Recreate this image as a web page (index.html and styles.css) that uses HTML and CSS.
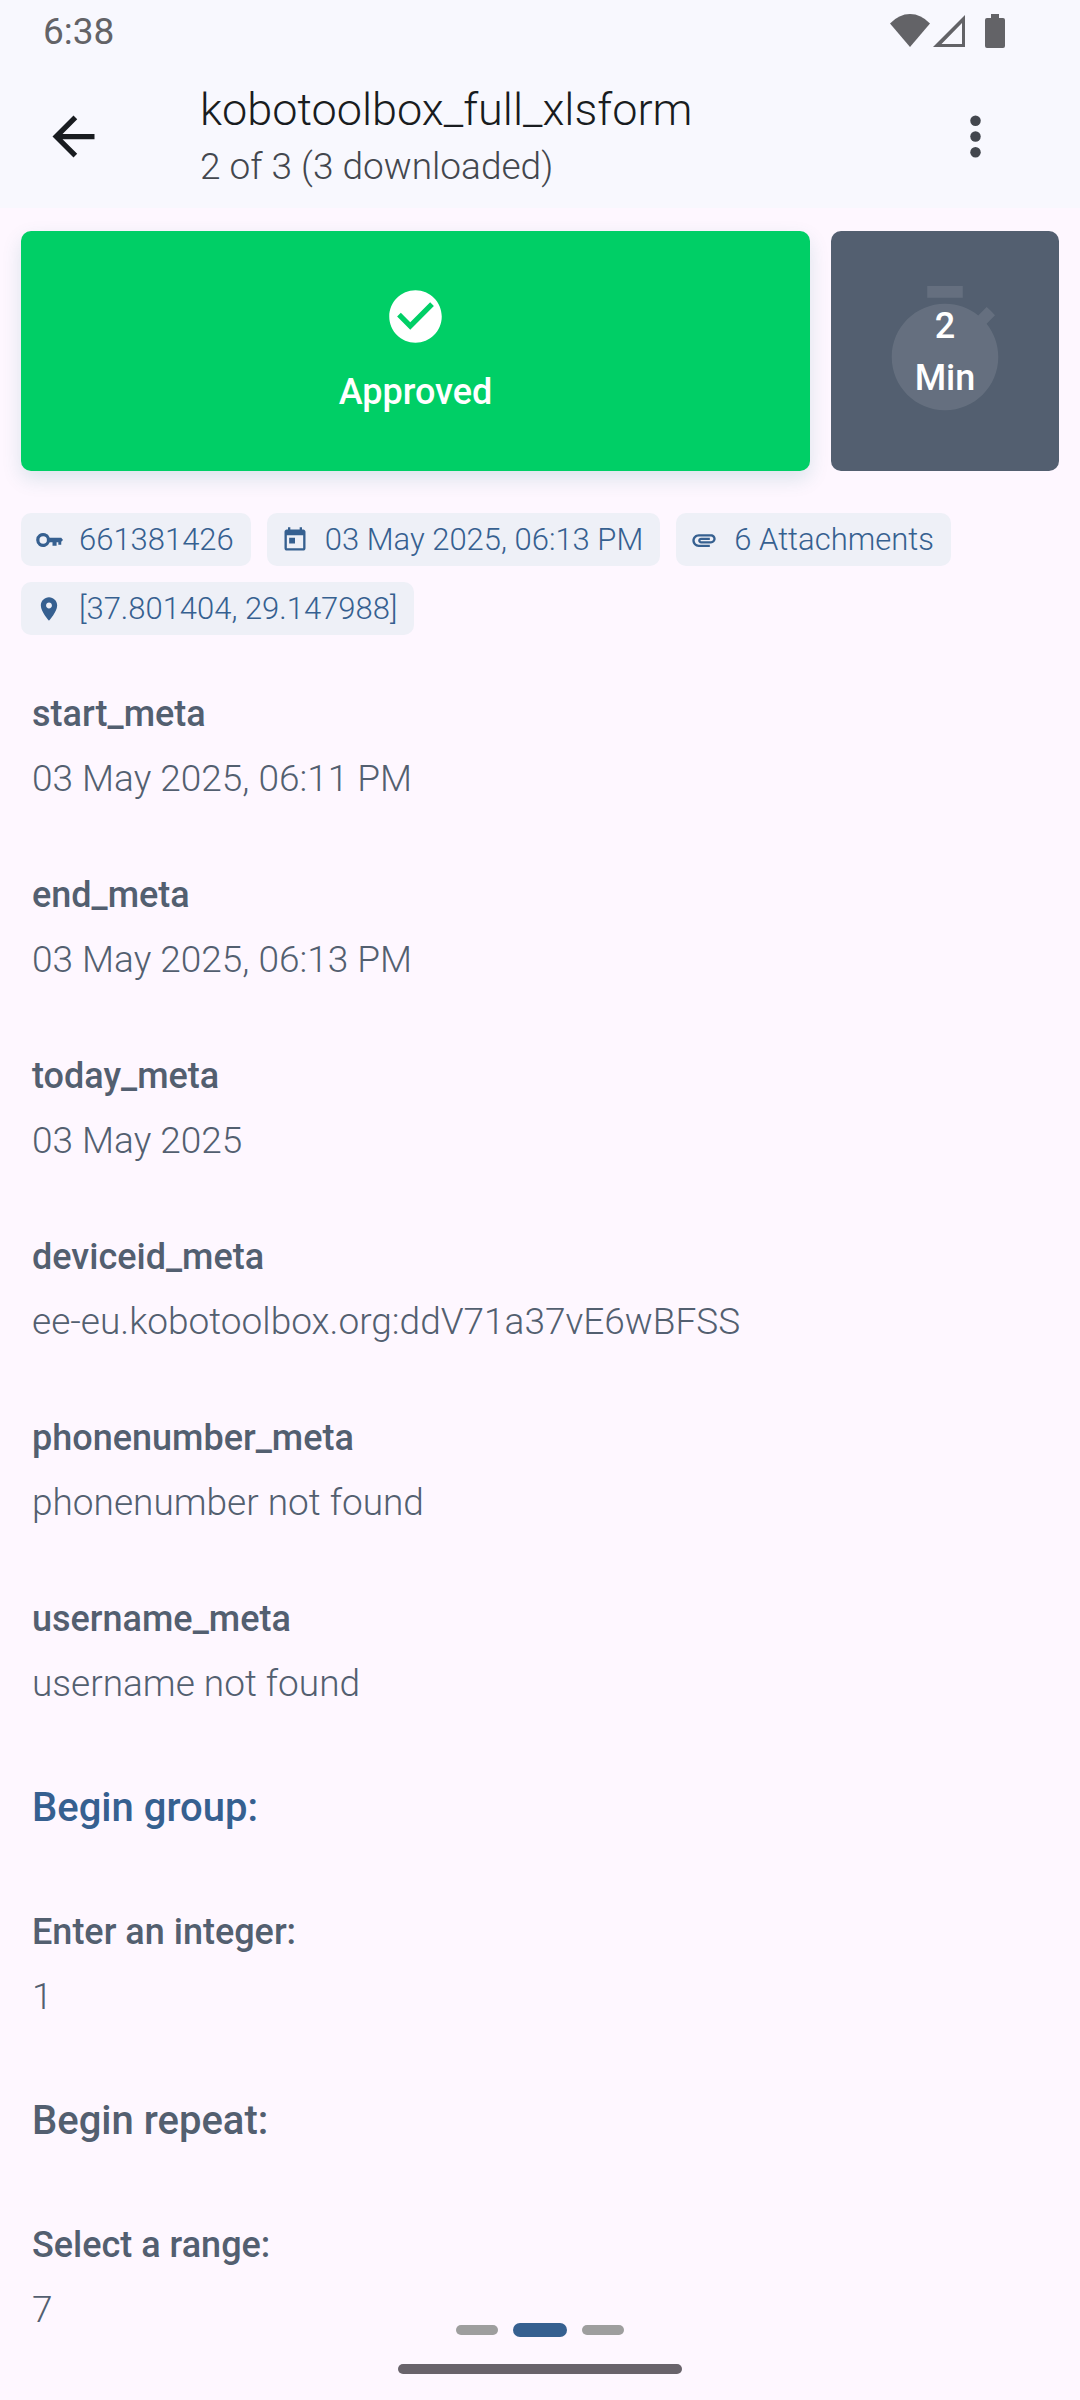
FILE: index.html
```html
<!DOCTYPE html>
<html lang="en">
<head>
<meta charset="utf-8">
<meta name="viewport" content="width=device-width, initial-scale=1">
<title>kobotoolbox_full_xlsform</title>
<link rel="stylesheet" href="styles.css">
</head>
<body>
<header class="top">
  <div class="status">
    <span class="clock">6:38</span>
    <div class="status-icons">
      <svg width="40" height="34" viewBox="0 0 40 34" aria-hidden="true"><path d="M0 9.500Q9 0 20 0T40 9.500L20 33z"/></svg>
      <svg class="signal" width="33" height="34" viewBox="0 0 33 34" aria-hidden="true"><path d="M32 1V33H0zM29 9L8.500 30H29z" fill-rule="evenodd"/></svg>
      <svg width="20" height="34" viewBox="0 0 20 34" aria-hidden="true"><path d="M6 0h8v4h4q2 0 2 2v26q0 2-2 2H2q-2 0-2-2V6q0-2 2-2h4z"/></svg>
    </div>
  </div>
  <div class="appbar">
    <button class="icon-button" type="button" aria-label="Back">
      <svg width="63" height="63" viewBox="0 0 24 24"><path d="M20 11H7.830l5.590-5.590L12 4l-8 8 8 8 1.410-1.410L7.830 13H20z"/></svg>
    </button>
    <div class="titles">
      <h1 class="title">kobotoolbox_full_xlsform</h1>
      <p class="subtitle">2 of 3 (3 downloaded)</p>
    </div>
    <button class="icon-button more" type="button" aria-label="More options">
      <svg width="63" height="63" viewBox="0 0 24 24"><circle cx="12" cy="6" r="2"/><circle cx="12" cy="12" r="2"/><circle cx="12" cy="18" r="2"/></svg>
    </button>
  </div>
</header>

<main class="content">
  <section class="cards">
    <button class="card approved" type="button">
      <svg width="63" height="63" viewBox="0 0 24 24" aria-hidden="true"><path d="M12 2C6.480 2 2 6.480 2 12s4.480 10 10 10 10-4.480 10-10S17.520 2 12 2zm-2 15l-5-5 1.410-1.410L10 14.170l7.590-7.590L19 8z"/></svg>
      <span>Approved</span>
    </button>
    <div class="card timer">
      <svg class="timer-icon" viewBox="0 0 24 24" aria-hidden="true"><path d="M15 1H9v2h6V1zm-4 13h2V8h-2v6zm8.030-6.610l1.420-1.420c-.43-.51-.9-.99-1.410-1.410l-1.420 1.420C16.070 4.740 14.120 4 12 4c-4.970 0-9 4.030-9 9s4.020 9 9 9 9-4.030 9-9c0-2.120-.74-4.070-1.970-5.610z"/></svg>
      <span class="timer-text">2<br>Min</span>
    </div>
  </section>

  <ul class="chips">
    <li class="chip"><svg viewBox="0 0 24 24" aria-hidden="true"><path fill-rule="evenodd" d="M12.650 10A6 6 0 1 0 12.650 14H15v3h3.500v-3H20v2h2.500v-2.500L24 12l-1.500-2zM7 15.200A3.200 3.200 0 1 1 7 8.800a3.200 3.200 0 0 1 0 6.400z"/></svg><span>661381426</span></li>
    <li class="chip"><svg viewBox="0 0 24 24" aria-hidden="true"><path d="M19 3h-1V1h-2v2H8V1H6v2H5c-1.110 0-1.990.9-1.990 2L3 19c0 1.100.89 2 2 2h14c1.100 0 2-.9 2-2V5c0-1.100-.9-2-2-2zm0 16H5V8h14v11zM7 10h5v5H7z"/></svg><span>03 May 2025, 06:13 PM</span></li>
    <li class="chip"><svg viewBox="0 0 24 24" aria-hidden="true"><path d="M2 12.500C2 9.460 4.460 7 7.500 7H18c2.210 0 4 1.790 4 4s-1.790 4-4 4H9.500C8.120 15 7 13.880 7 12.500S8.120 10 9.500 10H17v2H9.410c-.55 0-.55 1 0 1H18c1.100 0 2-.9 2-2s-.9-2-2-2H7.500C5.570 9 4 10.570 4 12.500S5.570 16 7.500 16H17v2H7.500C4.460 18 2 15.540 2 12.500z"/></svg><span>6 Attachments</span></li>
    <li class="chip"><svg viewBox="0 0 24 24" aria-hidden="true"><path d="M12 2C8.130 2 5 5.130 5 9c0 5.250 7 13 7 13s7-7.750 7-13c0-3.870-3.130-7-7-7zm0 9.500c-1.380 0-2.500-1.120-2.500-2.500s1.120-2.500 2.500-2.500 2.500 1.120 2.500 2.500-1.120 2.500-2.500 2.500z"/></svg><span>[37.801404, 29.147988]</span></li>
  </ul>

  <section class="fields">
    <div class="field"><h3 class="label">start_meta</h3><p class="value">03 May 2025, 06:11 PM</p></div>
    <div class="field"><h3 class="label">end_meta</h3><p class="value">03 May 2025, 06:13 PM</p></div>
    <div class="field"><h3 class="label">today_meta</h3><p class="value">03 May 2025</p></div>
    <div class="field"><h3 class="label">deviceid_meta</h3><p class="value">ee-eu.kobotoolbox.org:ddV71a37vE6wBFSS</p></div>
    <div class="field"><h3 class="label">phonenumber_meta</h3><p class="value">phonenumber not found</p></div>
    <div class="field"><h3 class="label">username_meta</h3><p class="value">username not found</p></div>
    <h2 class="group group-primary">Begin group:</h2>
    <div class="field"><h3 class="label">Enter an integer:</h3><p class="value">1</p></div>
    <h2 class="group">Begin repeat:</h2>
    <div class="field"><h3 class="label">Select a range:</h3><p class="value">7</p></div>
  </section>
</main>

<footer class="bottom">
  <div class="pager"><span class="dot"></span><span class="dot dot-active"></span><span class="dot"></span></div>
  <div class="home-bar"></div>
</footer>
</body>
</html>
```
FILE: styles.css
```css
* { box-sizing: border-box; }

body {
  margin: 0;
  min-height: 100vh;
  background: #fef7ff;
  color: #535f70;
  font-family: Roboto, "Noto Sans", sans-serif;
  font-size: 37px;
}

h1, h2, h3, p, ul { margin: 0; padding: 0; }
button { border: 0; padding: 0; font: inherit; cursor: pointer; }
svg { display: block; fill: currentColor; }

.top { background: #f8f8fe; }

.status {
  display: flex;
  justify-content: space-between;
  align-items: center;
  height: 62px;
  padding: 0 75px 0 43px;
  color: #636367;
}
.status-icons { display: flex; gap: 3px; }
.signal { margin-right: 16px; }

.appbar {
  display: flex;
  align-items: center;
  height: 146px;
  padding: 2px 73px 0 42px;
}
.icon-button { background: none; color: #191c20; }
.more { color: #43474e; }
.titles {
  flex: 1;
  padding: 2px 0 0 95px;
}
.title {
  color: #191c20;
  font-size: 45px;
  font-weight: 300;
  line-height: 60px;
}
.subtitle {
  color: #43474e;
  font-weight: 300;
  line-height: 54px;
}

.content { padding: 23px 21px 48px; }

.cards {
  display: grid;
  grid-template-columns: 1fr 228px;
  gap: 21px;
}
.card {
  display: flex;
  flex-direction: column;
  align-items: center;
  justify-content: center;
  height: 240px;
  border-radius: 10px;
  color: #fff;
  font-size: 36px;
  font-weight: 500;
  line-height: 52px;
}
.approved {
  gap: 18px;
  background: #00cf66;
  box-shadow: 0 8px 20px rgba(0, 110, 110, 0.14);
}
.timer {
  position: relative;
  padding-top: 2px;
  background: #535f70;
  text-align: center;
}
.timer-icon {
  position: absolute;
  inset: 49px 43px;
  opacity: 0.1;
}
.timer-text { position: relative; }

.chips {
  display: flex;
  flex-wrap: wrap;
  gap: 16px;
  margin-top: 42px;
  list-style: none;
}
.chip {
  display: flex;
  align-items: center;
  gap: 16px;
  height: 53px;
  padding: 0 17px 0 14px;
  border-radius: 10px;
  background: #eef0f7;
  color: #366090;
  font-size: 31px;
  font-weight: 300;
  line-height: 53px;
}
.chip svg {
  width: 28px;
  height: 28px;
}

.fields {
  display: flex;
  flex-direction: column;
  gap: 60px;
  margin-top: 51px;
  padding: 0 11px;
}
.field {
  display: grid;
  gap: 9px;
}
.label {
  font-size: 36px;
  font-weight: 500;
  line-height: 56px;
}
.value {
  font-weight: 300;
  line-height: 56px;
}
.group {
  font-size: 40px;
  font-weight: 500;
  line-height: 72px;
}
.group-primary { color: #366090; }

.bottom {
  position: fixed;
  right: 0;
  bottom: 26px;
  left: 0;
  display: flex;
  flex-direction: column;
  align-items: center;
  gap: 27px;
}
.pager {
  display: flex;
  align-items: center;
  gap: 15px;
}
.dot {
  width: 42px;
  height: 10px;
  border-radius: 5px;
  background: #9e9e9e;
}
.dot-active {
  width: 54px;
  height: 14px;
  border-radius: 7px;
  background: #366090;
}
.home-bar {
  width: 284px;
  height: 10px;
  border-radius: 5px;
  background: #69636b;
}
```
